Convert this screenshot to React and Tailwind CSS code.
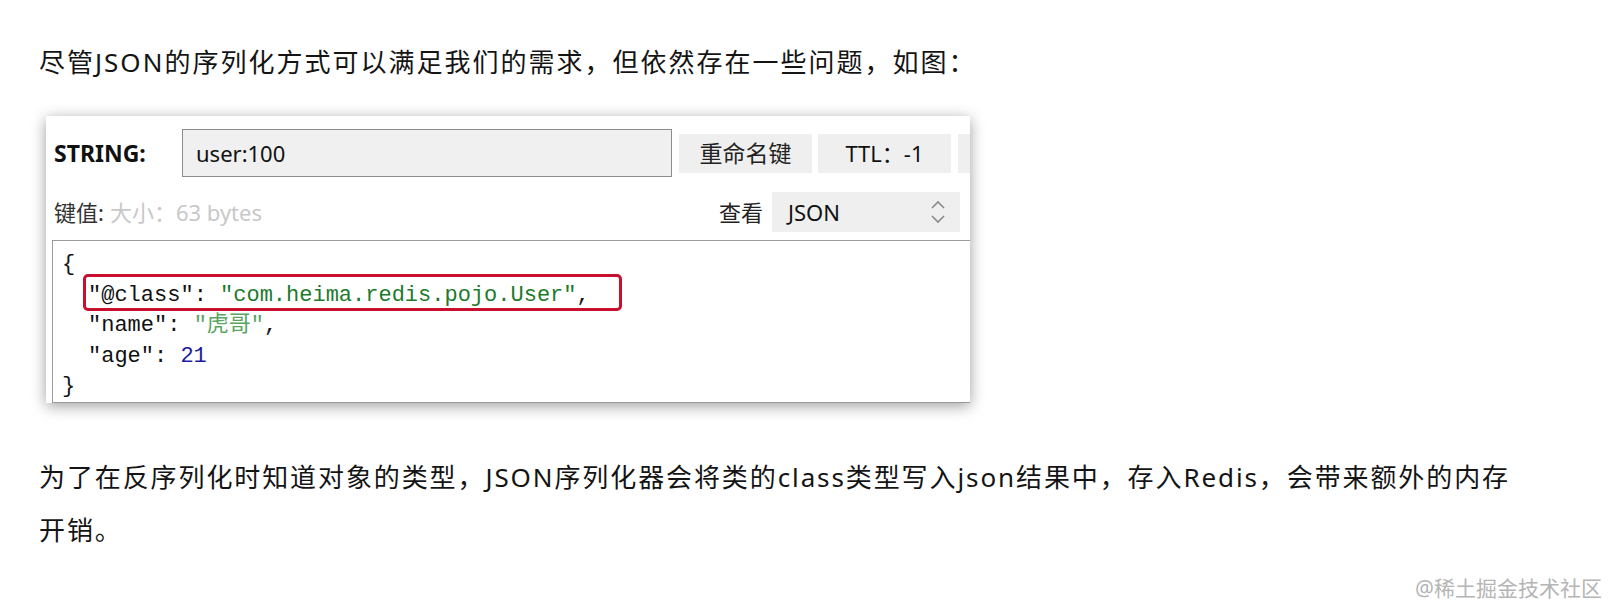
import React from "react";

const sans = "font-['Noto_Sans','Noto_Sans_CJK_SC',sans-serif]";
const mono = "font-['Liberation_Mono','Noto_Sans_CJK_SC',monospace]";

function Chevrons() {
  return (
    <svg width="16" height="26" viewBox="0 0 16 26" fill="none" stroke="#8a8a8a" strokeWidth="1.6">
      <path d="M2 9 L8 3 L14 9" />
      <path d="M2 17 L8 23 L14 17" />
    </svg>
  );
}

export default function App() {
  return (
    <div className={`relative w-full h-[607px] bg-white overflow-hidden text-[#141414] ${sans}`}>
      <div className="pl-[39px]">
        {/* ===== Intro ===== */}
        <p className="pt-[42px] text-[26px] leading-[40px] tracking-[2px]">
          尽管JSON的序列化方式可以满足我们的需求，但依然存在一些问题，如图：
        </p>

        {/* ===== Redis key panel screenshot ===== */}
        <div className="mt-[34px] ml-[7px] w-[924px] h-[287px] bg-white overflow-hidden shadow-[0_3px_14px_rgba(0,0,0,0.38)]">
          <div className="flex items-center pt-[13px] pl-[8px]">
            <span className="w-[128px] shrink-0 text-[23px] font-bold text-[#111]">STRING:</span>
            <div className="w-[490px] h-[48px] shrink-0 flex items-center pl-[13px] border border-[#8c8c8c] bg-[#f0f0f0] text-[22px] text-[#111]">
              user:100
            </div>
            <button className="ml-[7px] w-[133px] h-[39px] shrink-0 bg-[#efefef] text-[23px] text-[#222]">重命名键</button>
            <button className="ml-[6px] w-[133px] h-[39px] shrink-0 bg-[#efefef] text-[22px] text-[#111]">TTL：-1</button>
            <button className="ml-[7px] w-[60px] h-[39px] shrink-0 bg-[#efefef]" />
          </div>

          <div className="flex items-center justify-between mt-[15px] h-[40px] pl-[8px] pr-[10px]">
            <div className="flex items-center text-[22px]">
              <span className="text-[#333]">键值:</span>
              <span className="ml-[6px] text-[#c8c8c8]">大小：63 bytes</span>
            </div>
            <div className="flex items-center">
              <span className="text-[22px] text-[#222]">查看</span>
              <div className="ml-[9px] w-[188px] h-[40px] flex items-center justify-between pl-[16px] pr-[14px] bg-[#efefef] text-[22px] text-[#111]">
                JSON
                <Chevrons />
              </div>
            </div>
          </div>

          <div className={`mt-[8px] ml-[6px] h-[163px] border-l border-t border-b border-[#9a9a9a] pl-[9px] pt-[9px] text-[22px] leading-[30.5px] ${mono}`}>
            <div>{"{"}</div>
            <div className="pl-[26px]">
              <span className="relative">
                <span className="absolute -left-[5px] -right-[32px] -top-[9px] -bottom-[3px] border-[3px] border-[#c8102e] rounded-[5px]" />
                <span className="text-[#111]">"@class"</span>: <span className="text-[#1d7a2c]">"com.heima.redis.pojo.User"</span>,
              </span>
            </div>
            <div className="pl-[26px]">
              <span className="text-[#111]">"name"</span>: <span className="text-[#5aa55f]">"虎哥"</span>,
            </div>
            <div className="pl-[26px]">
              <span className="text-[#111]">"age"</span>: <span className="text-[#1c1ca0]">21</span>
            </div>
            <div>{"}"}</div>
          </div>
        </div>

        {/* ===== Explanation ===== */}
        <p className="mt-[48px] w-[1540px] text-[26px] leading-[53px] tracking-[1.9px]">
          为了在反序列化时知道对象的类型，JSON序列化器会将类的class类型写入json结果中，存入Redis，会带来额外的内存
          <br />
          开销。
        </p>
      </div>

      <div className="absolute right-[6px] bottom-[3px] text-[21px] text-[#b5b5b5]">@稀土掘金技术社区</div>
    </div>
  );
}
